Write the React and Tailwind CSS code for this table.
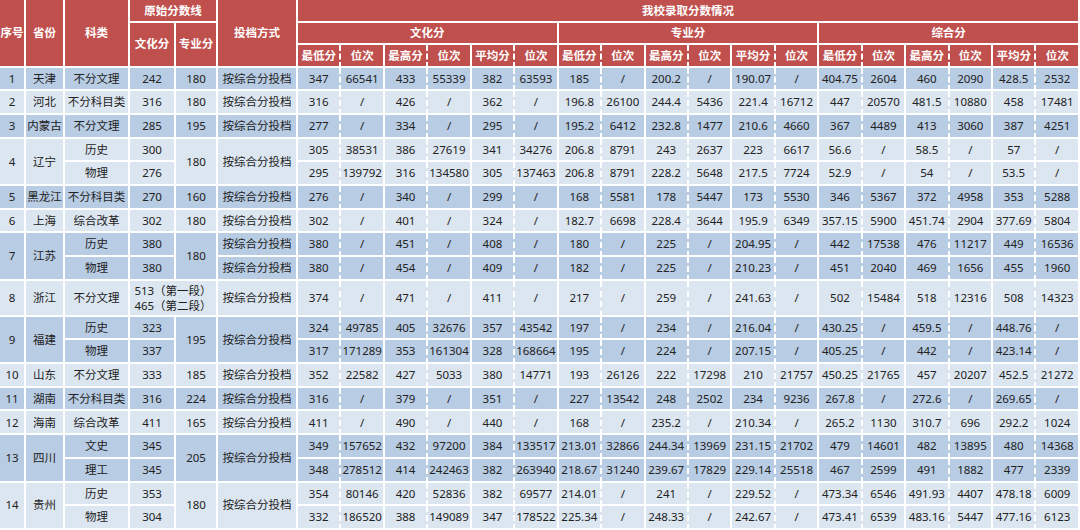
import React from "react";
import clsx from "clsx";

const groups = [
  { no: 1, prov: "天津", zy: "180", subs: [{ kl: "不分文理", wh: "242", v: ["347", "66541", "433", "55339", "382", "63593", "185", "/", "200.2", "/", "190.07", "/", "404.75", "2604", "460", "2090", "428.5", "2532"] }] },
  { no: 2, prov: "河北", zy: "180", subs: [{ kl: "不分科目类", wh: "316", v: ["316", "/", "426", "/", "362", "/", "196.8", "26100", "244.4", "5436", "221.4", "16712", "447", "20570", "481.5", "10880", "458", "17481"] }] },
  { no: 3, prov: "内蒙古", zy: "195", subs: [{ kl: "不分文理", wh: "285", v: ["277", "/", "334", "/", "295", "/", "195.2", "6412", "232.8", "1477", "210.6", "4660", "367", "4489", "413", "3060", "387", "4251"] }] },
  {
    no: 4, prov: "辽宁", zy: "180",
    subs: [
      { kl: "历史", wh: "300", v: ["305", "38531", "386", "27619", "341", "34276", "206.8", "8791", "243", "2637", "223", "6617", "56.6", "/", "58.5", "/", "57", "/"] },
      { kl: "物理", wh: "276", v: ["295", "139792", "316", "134580", "305", "137463", "206.8", "8791", "228.2", "5648", "217.5", "7724", "52.9", "/", "54", "/", "53.5", "/"] },
    ],
  },
  { no: 5, prov: "黑龙江", zy: "160", subs: [{ kl: "不分科目类", wh: "270", v: ["276", "/", "340", "/", "299", "/", "168", "5581", "178", "5447", "173", "5530", "346", "5367", "372", "4958", "353", "5288"] }] },
  { no: 6, prov: "上海", zy: "180", subs: [{ kl: "综合改革", wh: "302", v: ["302", "/", "401", "/", "324", "/", "182.7", "6698", "228.4", "3644", "195.9", "6349", "357.15", "5900", "451.74", "2904", "377.69", "5804"] }] },
  {
    no: 7, prov: "江苏", zy: "180", split: true,
    subs: [
      { kl: "历史", wh: "380", v: ["380", "/", "451", "/", "408", "/", "180", "/", "225", "/", "204.95", "/", "442", "17538", "476", "11217", "449", "16536"] },
      { kl: "物理", wh: "380", v: ["380", "/", "454", "/", "409", "/", "182", "/", "225", "/", "210.23", "/", "451", "2040", "469", "1656", "455", "1960"] },
    ],
  },
  { no: 8, prov: "浙江", zj: true, subs: [{ kl: "不分文理", v: ["374", "/", "471", "/", "411", "/", "217", "/", "259", "/", "241.63", "/", "502", "15484", "518", "12316", "508", "14323"] }] },
  {
    no: 9, prov: "福建", zy: "195",
    subs: [
      { kl: "历史", wh: "323", v: ["324", "49785", "405", "32676", "357", "43542", "197", "/", "234", "/", "216.04", "/", "430.25", "/", "459.5", "/", "448.76", "/"] },
      { kl: "物理", wh: "337", v: ["317", "171289", "353", "161304", "328", "168664", "195", "/", "224", "/", "207.15", "/", "405.25", "/", "442", "/", "423.14", "/"] },
    ],
  },
  { no: 10, prov: "山东", zy: "185", subs: [{ kl: "不分文理", wh: "333", v: ["352", "22582", "427", "5033", "380", "14771", "193", "26126", "222", "17298", "210", "21757", "450.25", "21765", "457", "20207", "452.5", "21272"] }] },
  { no: 11, prov: "湖南", zy: "224", subs: [{ kl: "不分科目类", wh: "316", v: ["316", "/", "379", "/", "351", "/", "227", "13542", "248", "2502", "234", "9236", "267.8", "/", "272.6", "/", "269.65", "/"] }] },
  { no: 12, prov: "海南", zy: "165", subs: [{ kl: "综合改革", wh: "411", v: ["411", "/", "490", "/", "440", "/", "168", "/", "235.2", "/", "210.34", "/", "265.2", "1130", "310.7", "696", "292.2", "1024"] }] },
  {
    no: 13, prov: "四川", zy: "205",
    subs: [
      { kl: "文史", wh: "345", v: ["349", "157652", "432", "97200", "384", "133517", "213.01", "32866", "244.34", "13969", "231.15", "21702", "479", "14601", "482", "13895", "480", "14368"] },
      { kl: "理工", wh: "345", v: ["348", "278512", "414", "242463", "382", "263940", "218.67", "31240", "239.67", "17829", "229.14", "25518", "467", "2599", "491", "1882", "477", "2339"] },
    ],
  },
  {
    no: 14, prov: "贵州", zy: "180",
    subs: [
      { kl: "历史", wh: "353", v: ["354", "80146", "420", "52836", "382", "69577", "214.01", "/", "241", "/", "229.52", "/", "473.34", "6546", "491.93", "4407", "478.18", "6009"] },
      { kl: "物理", wh: "304", v: ["332", "186520", "388", "149089", "347", "178522", "225.34", "/", "248.33", "/", "242.67", "/", "473.41", "6539", "483.16", "5447", "477.16", "6123"] },
    ],
  },
];

const subHeads = ["最低分", "位次", "最高分", "位次", "平均分", "位次"];

// cell border: right + bottom only, white
const cell = "border-r-2 border-b-2 border-white p-0 text-center align-middle whitespace-nowrap";
const dashed = "[border-right-style:dashed]";
const head = "bg-[#c0504d] text-white font-bold";

const DataCells = ({ v }) =>
  v.map((x, i) => (
    <td
      key={i}
      className={clsx(cell, i % 2 === 0 && dashed, i === 17 && "border-r-0")}
    >
      {x}
    </td>
  ));

const App = () => {
  return (
    <div className="h-[530px] w-[1080px] overflow-hidden bg-white">
      <table
        className="w-[1080px] table-fixed border-separate border-spacing-0 text-[11.5px] leading-none text-[#222]"
        style={{ fontFamily: '"Noto Sans", "Noto Sans CJK SC", sans-serif' }}
      >
        <colgroup>
          <col className="w-[26px]" />
          <col className="w-[39px]" />
          <col className="w-[65px]" />
          <col className="w-[46px]" />
          <col className="w-[42px]" />
          <col className="w-[80px]" />
          {Array.from({ length: 18 }).map((_, i) => (
            <col key={i} className="w-[43.44px]" />
          ))}
        </colgroup>
        <thead className={head}>
          <tr className="h-[22.5px]">
            <th rowSpan={3} className={cell}>序号</th>
            <th rowSpan={3} className={cell}>省份</th>
            <th rowSpan={3} className={cell}>科类</th>
            <th colSpan={2} className={cell}>原始分数线</th>
            <th rowSpan={3} className={cell}>投档方式</th>
            <th colSpan={18} className={clsx(cell, "border-r-0")}>我校录取分数情况</th>
          </tr>
          <tr className="h-[22.5px]">
            <th rowSpan={2} className={cell}>文化分</th>
            <th rowSpan={2} className={cell}>专业分</th>
            <th colSpan={6} className={cell}>文化分</th>
            <th colSpan={6} className={cell}>专业分</th>
            <th colSpan={6} className={clsx(cell, "border-r-0")}>综合分</th>
          </tr>
          <tr className="h-[22.5px]">
            {[0, 1, 2].map((g) =>
              subHeads.map((t, i) => (
                <th
                  key={g + "-" + i}
                  className={clsx(cell, i % 2 === 0 && dashed, g === 2 && i === 5 && "border-r-0")}
                >
                  {t}
                </th>
              ))
            )}
          </tr>
        </thead>
        <tbody>
          {groups.map((g) => {
            const n = g.subs.length;
            const bg = g.no % 2 === 1 ? "bg-[#b8cce4]" : "bg-[#dce6f1]";
            return g.subs.map((s, j) => (
              <tr key={g.no + "-" + j} className={clsx(bg, g.zj ? "h-[36px]" : "h-[23.7px]")}>
                {j === 0 && <td rowSpan={n} className={cell}>{g.no}</td>}
                {j === 0 && <td rowSpan={n} className={cell}>{g.prov}</td>}
                <td className={cell}>{s.kl}</td>
                {g.zj ? (
                  <td colSpan={2} className={clsx(cell, "leading-[15px]")}>
                    513（第一段）
                    <br />
                    465（第二段）
                  </td>
                ) : (
                  <>
                    <td className={cell}>{s.wh}</td>
                    {j === 0 && <td rowSpan={n} className={cell}>{g.zy}</td>}
                  </>
                )}
                {(g.split || j === 0) && (
                  <td rowSpan={g.split ? 1 : n} className={cell}>
                    按综合分投档
                  </td>
                )}
                <DataCells v={s.v} />
              </tr>
            ));
          })}
        </tbody>
      </table>
    </div>
  );
};

export default App;
